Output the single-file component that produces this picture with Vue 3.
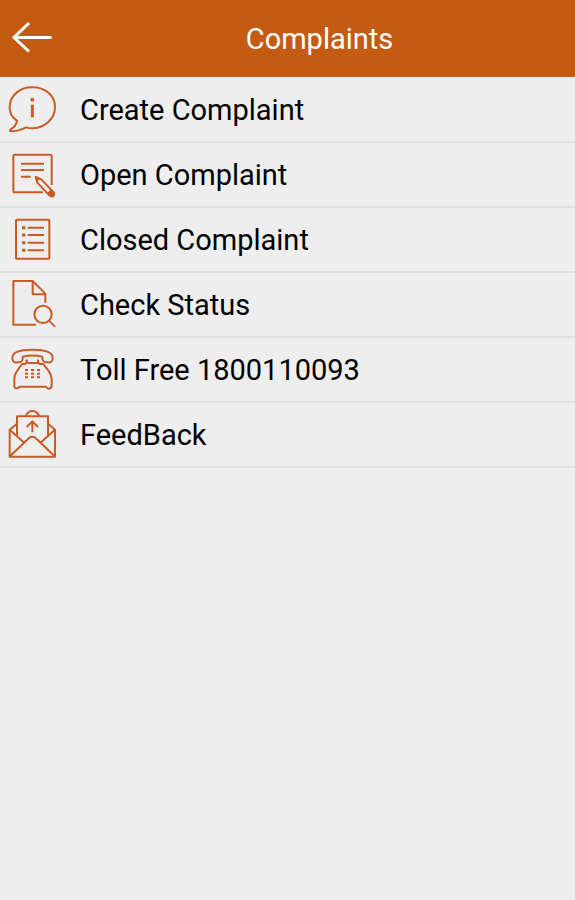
<script setup>
const items = [
    { icon: 'info', label: 'Create Complaint', link: '#create' },
    { icon: 'edit', label: 'Open Complaint', link: '#open' },
    { icon: 'list', label: 'Closed Complaint', link: '#closed' },
    { icon: 'search', label: 'Check Status', link: '#status' },
    { icon: 'phone', label: 'Toll Free 1800110093', link: 'tel:1800110093' },
    { icon: 'mail', label: 'FeedBack', link: '#feedback' },
];
</script>

<template>
    <div class="page">
        <header class="header">
            <button type="button" class="back" aria-label="Back">
                <svg viewBox="0 0 64 77" class="back-icon">
                    <path d="M51.5 37.5H14M29 23L14 37.5L29 51.5" />
                </svg>
            </button>
            <h1 class="title">Complaints</h1>
        </header>

        <nav class="menu">
            <a v-for="item in items" :key="item.icon" :href="item.link" class="menu-item">
                <svg viewBox="0 3 192 189" class="icon" aria-hidden="true">
                    <g v-if="item.icon === 'info'">
                        <path d="M51 131C36 121 29 108 29 92C29 55 59 31 97 31C136 31 165 55 165 90C165 127 132 154 96 154C89 154 84 153 78 151C64 158 49 163 33 163C29 163 29 160 32 157C42 151 50 142 51 131Z" />
                        <path d="M97 83V121" class="thick" />
                        <circle cx="97" cy="68" r="6" class="solid" />
                    </g>
                    <g v-else-if="item.icon === 'edit'">
                        <path d="M129 151H45Q40 151 40 146V43Q40 38 45 38H150Q155 38 155 43V129" />
                        <path d="M63 65H132M63 84H132M63 104H92" />
                        <path d="M107 105L124 112L161 151Q165 157 160 162Q154 165 148 160L112 122Z" />
                        <path d="M105 103L121 109L111 119ZM151 143L163 153Q166 159 161 163Q155 166 149 161L142 153Z" class="solid" />
                    </g>
                    <g v-else-if="item.icon === 'list'">
                        <rect x="48" y="38" width="100" height="117" rx="2" />
                        <path d="M83 62H132M83 84H132M83 107H132M83 130H132" />
                        <path d="M66 62H76M66 84H76M66 107H76M66 130H76" class="thick" />
                    </g>
                    <g v-else-if="item.icon === 'search'">
                        <path d="M108 158H40V27H98L136 65V92M98 27V67H136" />
                        <circle cx="129" cy="127" r="26" />
                        <path d="M147 146L165 164" />
                    </g>
                    <g v-else-if="item.icon === 'phone'">
                        <path d="M37 65C35 47 56 38 97 38C139 38 160 47 158 65C157 77 151 77 142 76C131 76 127 74 127 64V59C110 55 85 55 68 59V64C68 74 64 76 53 76C44 77 38 77 37 65Z" />
                        <path d="M80 68V75Q80 79 75 81H66L51 102Q43 113 43 126V147Q43 155 52 154Q57 153 58 149H138Q140 154 146 155Q155 154 155 147V126Q155 113 146 102L130 81H119Q114 79 114 75V68" />
                        <path d="M80 68V74Q81 78 86 78H108Q114 78 114 74V68" />
                        <path d="M75 99H84M93 99H102M111 99H120M75 110H84M93 110H102M111 110H120M75 121H84M93 121H102M111 121H120" />
                    </g>
                    <g v-else>
                        <path d="M51 65L29 83V164H165V83L144 65" />
                        <path d="M51 101V43H144V101" />
                        <path d="M29 83L71 121M165 83L123 121M30 163L88 107Q97 101 106 107L164 163" />
                        <path d="M77 42Q84 27 97 27Q110 27 118 42" />
                        <path d="M97 91V59M80 75L97 58L114 75" />
                    </g>
                </svg>
                <span class="label">{{ item.label }}</span>
            </a>
        </nav>
    </div>
</template>

<style>
body {
    margin: 0;
    background: #eeeeee;
}
</style>

<style scoped>
.page {
    min-height: 100vh;
    background: #eeeeee;
    font-family: Roboto, sans-serif;
}

.header {
    display: flex;
    align-items: center;
    height: 77px;
    background: #c55a11;
    color: #fff;
}

.back {
    flex: none;
    width: 64px;
    height: 77px;
    padding: 0;
    border: 0;
    background: none;
    cursor: pointer;
}

.back-icon {
    display: block;
    width: 64px;
    height: 77px;
    fill: none;
    stroke: #fff;
    stroke-width: 3;
}

.title {
    flex: 1;
    margin: 0;
    font-size: 29px;
    font-weight: 400;
    line-height: 40px;
    text-align: center;
}

.menu {
    padding-top: 1px;
}

.menu-item {
    display: flex;
    align-items: center;
    gap: 16px;
    border-bottom: 2px solid #dfdfdf;
    color: #000;
    text-decoration: none;
}

.icon {
    flex: none;
    width: 64px;
    height: 63px;
    fill: none;
    stroke: #cb5b25;
    stroke-width: 6;
    stroke-linejoin: round;
}

.icon .thick {
    stroke-width: 9;
}

.icon .solid {
    fill: #cb5b25;
    stroke: none;
}

.label {
    font-size: 29px;
    line-height: 40px;
}
</style>
